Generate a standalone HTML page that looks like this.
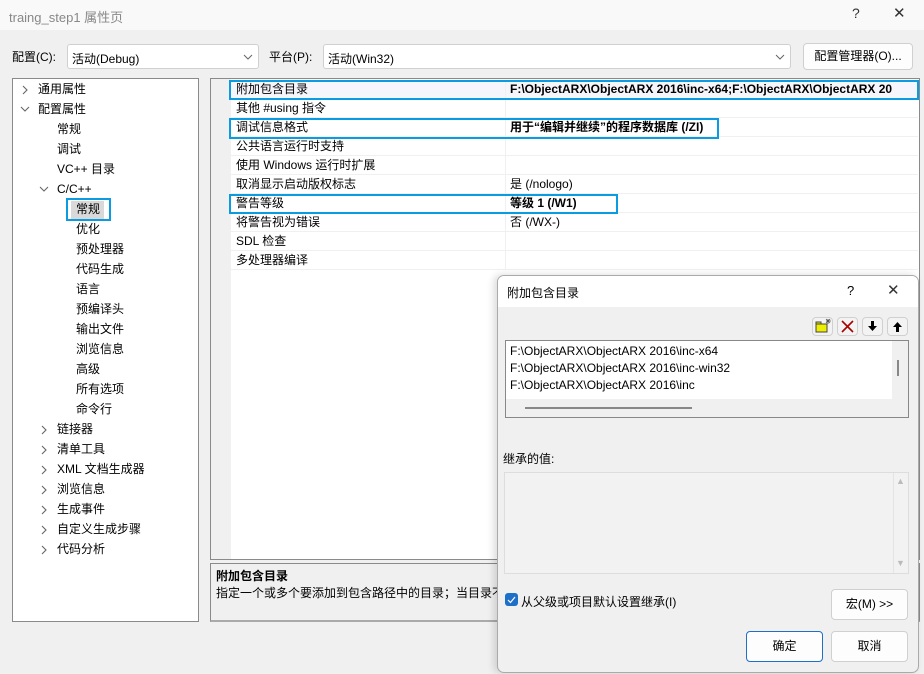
<!DOCTYPE html>
<html><head><meta charset="utf-8"><style>
*{box-sizing:border-box;margin:0;padding:0}
body{width:924px;height:674px;background:#f0f0f0;font-family:"Liberation Sans","Noto Sans CJK SC",sans-serif;font-size:12px;color:#000;position:relative;overflow:hidden}
.a{position:absolute;white-space:nowrap}
.cb{background:#fff;border:1px solid #d0d0d0;border-radius:3px}
.btn{background:#fdfdfd;border:1px solid #d0d0d0;border-radius:4px;text-align:center}
.t{position:absolute;height:20px;line-height:20px;white-space:nowrap}
.chev{position:absolute}
.row{position:absolute;left:231px;width:687px;height:19px;border-bottom:1px solid #f0f0f0;line-height:18px;padding-left:5px}
.row .v{position:absolute;left:274px;top:0;border-left:1px solid #f0f0f0;padding-left:4px;height:19px}
.hb{position:absolute;border:2px solid #0a9be0}
</style></head><body>
<div class="a" style="left:0;top:0;width:924px;height:30px;background:#f9f9f9"></div>
<div class="a" style="left:9px;top:7px;color:#888;font-size:13px">traing_step1 属性页</div>
<div class="a" style="left:852px;top:5px;font-size:14px;color:#333">?</div>
<div class="a" style="left:893px;top:4px;font-size:15px;color:#333">✕</div>

<div class="a" style="left:12px;top:48px">配置(C):</div>
<div class="a cb" style="left:67px;top:44px;width:192px;height:25px"><span class="a" style="left:4px;top:5px">活动(Debug)</span><svg class="a" style="left:175px;top:8px" width="10" height="8"><path d="M1 2l4 4 4-4" fill="none" stroke="#666"/></svg></div>
<div class="a" style="left:269px;top:48px">平台(P):</div>
<div class="a cb" style="left:323px;top:44px;width:468px;height:25px"><span class="a" style="left:4px;top:5px">活动(Win32)</span><svg class="a" style="left:451px;top:8px" width="10" height="8"><path d="M1 2l4 4 4-4" fill="none" stroke="#666"/></svg></div>
<div class="a btn" style="left:803px;top:43px;width:110px;height:27px;line-height:25px">配置管理器(O)...</div>

<div class="a" style="left:12px;top:78px;width:187px;height:544px;background:#fff;border:1px solid #8a8a8a"></div>
<svg class="a" style="left:0;top:0" width="60" height="560">
<g fill="none" stroke="#666" stroke-width="1.1">
<path d="M23 86l4 4-4 4"/>
<path d="M21 107l4 4 4-4"/>
<path d="M40 187l4 4 4-4"/>
<path d="M42 426l4 4-4 4"/><path d="M42 446l4 4-4 4"/><path d="M42 466l4 4-4 4"/><path d="M42 486l4 4-4 4"/><path d="M42 506l4 4-4 4"/><path d="M42 526l4 4-4 4"/><path d="M42 546l4 4-4 4"/>
</g></svg>
<div class="t" style="left:38px;top:79px">通用属性</div>
<div class="t" style="left:38px;top:99px">配置属性</div>
<div class="t" style="left:57px;top:119px">常规</div>
<div class="t" style="left:57px;top:139px">调试</div>
<div class="t" style="left:57px;top:159px">VC++ 目录</div>
<div class="t" style="left:57px;top:179px">C/C++</div>
<div class="a" style="left:66px;top:198px;width:45px;height:23px;border:2px solid #0a9be0"></div>
<div class="a" style="left:71px;top:201px;width:33px;height:18px;background:#d9d9d9"></div>
<div class="t" style="left:76px;top:199px">常规</div>
<div class="t" style="left:76px;top:219px">优化</div>
<div class="t" style="left:76px;top:239px">预处理器</div>
<div class="t" style="left:76px;top:259px">代码生成</div>
<div class="t" style="left:76px;top:279px">语言</div>
<div class="t" style="left:76px;top:299px">预编译头</div>
<div class="t" style="left:76px;top:319px">输出文件</div>
<div class="t" style="left:76px;top:339px">浏览信息</div>
<div class="t" style="left:76px;top:359px">高级</div>
<div class="t" style="left:76px;top:379px">所有选项</div>
<div class="t" style="left:76px;top:399px">命令行</div>
<div class="t" style="left:57px;top:419px">链接器</div>
<div class="t" style="left:57px;top:439px">清单工具</div>
<div class="t" style="left:57px;top:459px">XML 文档生成器</div>
<div class="t" style="left:57px;top:479px">浏览信息</div>
<div class="t" style="left:57px;top:499px">生成事件</div>
<div class="t" style="left:57px;top:519px">自定义生成步骤</div>
<div class="t" style="left:57px;top:539px">代码分析</div>

<div class="a" style="left:210px;top:78px;width:710px;height:482px;background:#fff;border:1px solid #8a8a8a"></div>
<div class="a" style="left:211px;top:79px;width:20px;height:480px;background:#f0f0f0"></div>
<div class="row" style="top:80px;background:#f4f6fb">附加包含目录<div class="v" style="font-weight:bold">F:\ObjectARX\ObjectARX 2016\inc-x64;F:\ObjectARX\ObjectARX 20</div></div>
<div class="row" style="top:99px">其他 #using 指令<div class="v"></div></div>
<div class="row" style="top:118px">调试信息格式<div class="v" style="font-weight:bold">用于“编辑并继续”的程序数据库 (/ZI)</div></div>
<div class="row" style="top:137px">公共语言运行时支持<div class="v"></div></div>
<div class="row" style="top:156px">使用 Windows 运行时扩展<div class="v"></div></div>
<div class="row" style="top:175px">取消显示启动版权标志<div class="v">是 (/nologo)</div></div>
<div class="row" style="top:194px">警告等级<div class="v" style="font-weight:bold">等级 1 (/W1)</div></div>
<div class="row" style="top:213px">将警告视为错误<div class="v">否 (/WX-)</div></div>
<div class="row" style="top:232px">SDL 检查<div class="v"></div></div>
<div class="row" style="top:251px">多处理器编译<div class="v"></div></div>
<div class="hb" style="left:229px;top:80px;width:690px;height:20px"></div>
<div class="hb" style="left:229px;top:118px;width:490px;height:21px"></div>
<div class="hb" style="left:229px;top:194px;width:389px;height:20px"></div>

<div class="a" style="left:210px;top:563px;width:710px;height:59px;border:1px solid #8a8a8a;border-bottom:2px solid #aaa"></div>
<div class="a" style="left:216px;top:567px;font-weight:bold">附加包含目录</div>
<div class="a" style="left:216px;top:584px">指定一个或多个要添加到包含路径中的目录；当目录不</div>

<div class="a" style="left:497px;top:275px;width:422px;height:398px;background:#f0f0f0;border:1px solid #aaa;border-radius:7px;overflow:hidden;box-shadow:-3px 0 8px rgba(0,0,0,.15)">
<div class="a" style="left:0;top:0;width:422px;height:31px;background:#fff"></div>
<div class="a" style="left:9px;top:8px;font-size:12px">附加包含目录</div>
<div class="a" style="left:349px;top:7px;font-size:13px">?</div>
<div class="a" style="left:389px;top:5px;font-size:15px;color:#333">✕</div>
<div class="a btn" style="left:314px;top:41px;width:21px;height:19px;background:#f3f3f3"><svg width="19" height="17"><rect x="3" y="6" width="11" height="8" fill="#ee0" stroke="#444"/><rect x="3" y="4" width="5" height="2" fill="#ee0" stroke="#444"/><path d="M15 1v5M13 3h5M13 1l4 4M17 1l-4 4" stroke="#555" stroke-width=".8"/></svg></div>
<div class="a btn" style="left:339px;top:41px;width:21px;height:19px;background:#f3f3f3"><svg width="19" height="17"><path d="M4 3l11 11M15 3L4 14" stroke="#a00" stroke-width="1.6"/></svg></div>
<div class="a btn" style="left:364px;top:41px;width:21px;height:19px;background:#f3f3f3"><svg width="19" height="17"><path d="M8 3h3v5h3l-4.5 5L5 8h3z" fill="#000"/></svg></div>
<div class="a btn" style="left:389px;top:41px;width:21px;height:19px;background:#f3f3f3"><svg width="19" height="17"><path d="M8 14h3V9h3L9.5 4 5 9h3z" fill="#000"/></svg></div>
<div class="a" style="left:7px;top:64px;width:404px;height:78px;border:1px solid #888;background:#f0f0f0"></div>
<div class="a" style="left:8px;top:65px;width:386px;height:58px;background:#fff"></div>
<div class="a" style="left:12px;top:67px;line-height:17px">F:\ObjectARX\ObjectARX 2016\inc-x64<br>F:\ObjectARX\ObjectARX 2016\inc-win32<br>F:\ObjectARX\ObjectARX 2016\inc</div>
<div class="a" style="left:399px;top:84px;width:2px;height:16px;background:#888"></div>
<div class="a" style="left:27px;top:131px;width:167px;height:2px;background:#888"></div>
<div class="a" style="left:5px;top:174px">继承的值:</div>
<div class="a" style="left:6px;top:196px;width:405px;height:102px;border:1px solid #ddd;background:#f2f2f2"></div>
<div class="a" style="left:395px;top:197px;width:1px;height:100px;background:#e4e4e4"></div>
<div class="a" style="left:398px;top:200px;color:#bbb;font-size:9px">▲</div>
<div class="a" style="left:398px;top:282px;color:#bbb;font-size:9px">▼</div>
<div class="a" style="left:7px;top:317px;width:13px;height:13px;background:#1e6fc8;border-radius:3px"><svg width="13" height="13"><path d="M3 7l2.5 2.5L10 4" fill="none" stroke="#fff" stroke-width="1.2"/></svg></div>
<div class="a" style="left:23px;top:317px">从父级或项目默认设置继承(I)</div>
<div class="a btn" style="left:333px;top:313px;width:77px;height:31px;line-height:29px">宏(M) &gt;&gt;</div>
<div class="a btn" style="left:248px;top:355px;width:77px;height:31px;line-height:29px;border-color:#1e6fc8">确定</div>
<div class="a btn" style="left:333px;top:355px;width:77px;height:31px;line-height:29px">取消</div>
</div>
</body></html>
